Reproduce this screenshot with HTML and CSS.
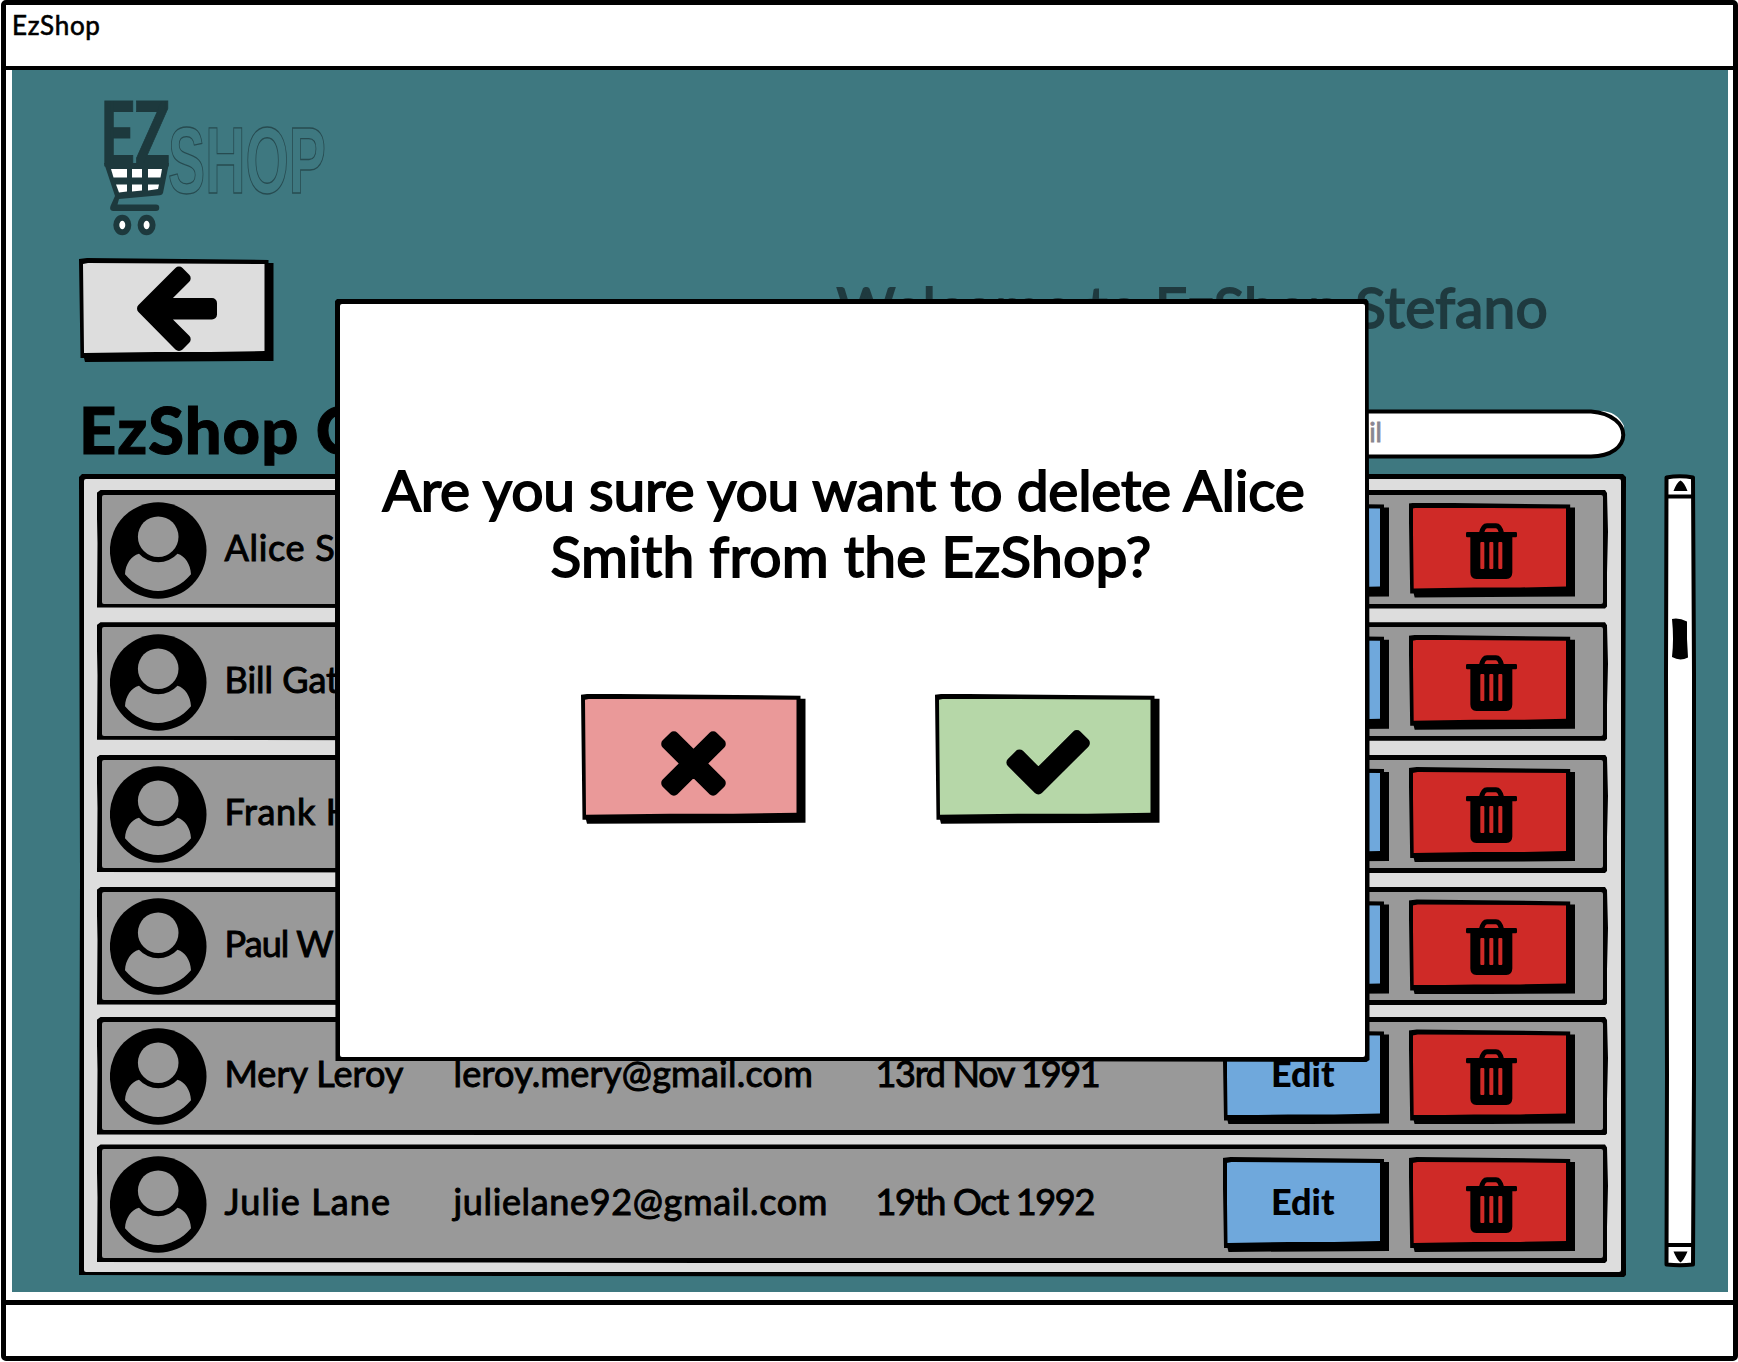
FILE: index.html
```html
<!DOCTYPE html>
<html lang="en">
<head>
<meta charset="utf-8">
<title>EzShop</title>
<link rel="stylesheet" href="styles.css">
</head>
<body>
<svg class="defs" aria-hidden="true">
  <symbol id="avatar" viewBox="0 0 97 97">
    <circle cx="48.2" cy="48.5" r="48.3" fill="#000"/>
    <circle cx="48.2" cy="34.7" r="20.3" fill="#999"/>
    <path fill="#999" d="M29 51.7A26 26 0 0 0 67.5 51.7C75 54 80.5 62 81 72.3C72 83 60 89 48 89C36 89 24 83 15 72.3C15.5 62 21 54 29 51.7Z"/>
  </symbol>
  <symbol id="trash" viewBox="0 0 153 168">
    <path fill="none" stroke="#000" stroke-width="15" d="M46 32C50 14 54 8 63 8H90C99 8 103 14 107 32"/>
    <rect y="27" width="153" height="16" rx="4"/>
    <path fill-rule="evenodd" d="M13 38H139V148Q139 168 121 168H31Q13 168 13 148ZM46 57Q43 57 43 60V135Q43 138 46 138H52Q55 138 55 135V60Q55 57 52 57ZM73 57Q70 57 70 60V135Q70 138 73 138H79Q82 138 82 135V60Q82 57 79 57ZM100 57Q97 57 97 60V135Q97 138 100 138H106Q109 138 109 135V60Q109 57 106 57Z"/>
  </symbol>
</svg>
<div class="window">
  <header class="titlebar">EzShop</header>
  <main class="screen">
    <svg class="logo" viewBox="79 71 260 169" width="260" height="169">
      <g class="logo-text">
        <text x="101" y="166" font-size="91.5" textLength="69" lengthAdjust="spacingAndGlyphs" class="logo-ez">EZ</text>
        <text x="168" y="193" font-size="95" textLength="158" lengthAdjust="spacingAndGlyphs" class="logo-shop">SHOP</text>
      </g>
      <path fill="#1d393d" d="M104 163H169L163 193Q162.500 195 160 195.300L119 199L117.500 204.500H156A3.200 3.200 0 0 1 156 211H113Q109 210.500 110.500 206L115 196Z"/>
      <g fill="#fff">
        <path d="M111 169H127V177.500H113.500Z"/><path d="M132 169H142V177.500H132Z"/><path d="M148 169H162L160.500 177.500H148Z"/>
        <path d="M116 184.500H127V191.500L119 192.500Z"/><path d="M132 184.500H142V190.500L132 191.500Z"/><path d="M148 184.500H159L158 189L148 190.500Z"/>
      </g>
      <g fill="#fff" stroke="#1d393d" stroke-width="6">
        <ellipse cx="122.300" cy="225" rx="6" ry="7.300"/><ellipse cx="146.600" cy="225" rx="6" ry="7.300"/>
      </g>
    </svg>
    <div class="topline">
      <button class="btn back" aria-label="Back">
        <svg viewBox="0 0 80 85" width="80" height="85"><path class="solid" d="M5 42.500L42 5.500L48.700 12.200L23.900 37H75V48.500H23.900L48.700 73.300L42 80Z"/></svg>
      </button>
      <h2 class="welcome">Welcome to EzShop Stefano</h2>
    </div>
    <div class="listhead">
      <h1>EzShop Customers</h1>
      <div class="search">
        <svg viewBox="0 0 526 50" width="526" height="50"><path fill="#fff" d="M24 2H500Q517 2 524 17L520 38L505 45H24Z"/><path fill="#fff" stroke="#000" stroke-width="4" d="M24 2.500H491C535 6 533 47.500 491 47.500H24C-5 47 -5 4 24 2.500Z"/></svg>
        <span>Search by email</span>
      </div>
    </div>
    <div class="content">
      <section class="panel">
        <article class="row"><svg class="avatar"><use href="#avatar"/></svg><span class="name medium">Alice Smith</span><span class="mail"></span><span class="date"></span><button class="btn edit">Edit</button><button class="btn del" aria-label="Delete"><svg><use href="#trash"/></svg></button></article>
        <article class="row"><svg class="avatar"><use href="#avatar"/></svg><span class="name">Bill Gates</span><span class="mail"></span><span class="date"></span><button class="btn edit">Edit</button><button class="btn del" aria-label="Delete"><svg><use href="#trash"/></svg></button></article>
        <article class="row"><svg class="avatar"><use href="#avatar"/></svg><span class="name medium">Frank H</span><span class="mail"></span><span class="date"></span><button class="btn edit">Edit</button><button class="btn del" aria-label="Delete"><svg><use href="#trash"/></svg></button></article>
        <article class="row"><svg class="avatar"><use href="#avatar"/></svg><span class="name tight">Paul W</span><span class="mail"></span><span class="date"></span><button class="btn edit">Edit</button><button class="btn del" aria-label="Delete"><svg><use href="#trash"/></svg></button></article>
        <article class="row"><svg class="avatar"><use href="#avatar"/></svg><span class="name">Mery Leroy</span><span class="mail">leroy.mery@gmail.com</span><span class="date">13rd Nov 1991</span><button class="btn edit">Edit</button><button class="btn del" aria-label="Delete"><svg><use href="#trash"/></svg></button></article>
        <article class="row"><svg class="avatar"><use href="#avatar"/></svg><span class="name wide">Julie Lane</span><span class="mail wide">julielane92@gmail.com</span><span class="date">19th Oct 1992</span><button class="btn edit">Edit</button><button class="btn del" aria-label="Delete"><svg><use href="#trash"/></svg></button></article>
      </section>
      <svg class="scrollbar" viewBox="0 0 32 794" width="32" height="794">
        <path fill="#fff" stroke="#000" stroke-width="4" stroke-linejoin="round" d="M2.500 3.500Q16 1 29 3.500L30 200V600L29 790.500Q16 792 2.500 790.500L3 600L2 200Z"/>
        <path stroke="#000" stroke-width="4" d="M2 22.500H30M2 771H30"/>
        <path d="M9.500 17Q13 8 16.500 6.500Q20 8 23.500 17ZM9.500 777.500H23.500Q20 786 16.500 788.500Q13 786 9.500 777.500Z"/>
        <path d="M8 145Q15 143.500 23 147.500Q22.500 165 24 183.500Q16 187.500 8 183Q10 165 8 145Z"/>
      </svg>
    </div>
  </main>
  <footer class="statusbar"></footer>
  <div class="modal" role="dialog">
    <p><span class="l1">Are you sure you want to delete Alice</span><br><span class="l2">Smith from the EzShop?</span></p>
    <div class="choices">
      <button class="btn no" aria-label="Cancel"><svg viewBox="-32.500 -32.500 65 65" width="65" height="65"><path class="solid" d="M19.600-27.300L27.300-19.600L7.700 0L27.300 19.600L19.600 27.300L0 7.700L-19.600 27.300L-27.300 19.600L-7.700 0L-27.300-19.600L-19.600-27.300L0-7.700Z"/></svg></button>
      <button class="btn yes" aria-label="Confirm"><svg viewBox="0 0 84 65" width="84" height="65"><path class="solid" d="M5.400 32.500L13.450 24.400L32.400 43.400L70.800 5L78.900 13.100L32.400 59.500Z"/></svg></button>
    </div>
  </div>
</div>
</body>
</html>
```
FILE: styles.css
```css
* { box-sizing: border-box; margin: 0; padding: 0; }
body { width: 1738px; height: 1362px; overflow: hidden; background: #fff; color: #000; font-family: Lato, "Open Sans", sans-serif; }
.defs { position: absolute; width: 0; height: 0; }
.window { position: relative; display: flex; flex-direction: column; width: 1737px; height: 1361px; margin-left: 1px; border: 5px solid #000; border-top-width: 5.5px; border-radius: 5px; background: #fff; }
.titlebar { height: 65px; border-bottom: 4px solid #000; padding: 5px 6px; font-size: 26px; line-height: 30px; letter-spacing: 0.7px; -webkit-text-stroke: 0.6px #000; }
.screen { display: flex; flex-direction: column; height: 1222px; margin: 0 5px 0 6px; padding: 1px 0 0 67px; background: #3e7880; }
.statusbar { flex: 1; margin-top: 8px; border-top: 5px solid #000; }
.logo { display: block; flex: none; overflow: visible; }
.logo-text { font-weight: 700; }
.logo-ez { font-family: Roboto, sans-serif; fill: #1d393d; stroke: #1d393d; }
.logo-shop { font-family: "Liberation Sans", sans-serif; fill: none; stroke: #274b50; stroke-width: 1.3; }
.solid { fill: #000; stroke: #000; stroke-width: 10; stroke-linejoin: round; }

/* hand-drawn button: black slab with a coloured face cut into it */
.btn {
  position: relative; z-index: 0; display: flex; align-items: center; justify-content: center; flex: none;
  border: 0; background: #000; color: #000; font: inherit;
  clip-path: polygon(0 1px, 8px 0, calc(100% - 5px) 2px, calc(100% - 5px) 5px, 100% 5px, 100% calc(100% - 1px), 6px 100%, 5px calc(100% - 4px), 1.5px calc(100% - 4px));
}
.btn::before {
  content: ""; position: absolute; z-index: -1; inset: 5px 9px 9px 4px; background: var(--face);
  clip-path: polygon(0 1px, 5px 0, 100% 1px, 100% calc(100% - 2px), 70% calc(100% - 1px), 40% calc(100% - 1px), 1px 100%);
}
.back { --face: #ddd; width: 194.5px; height: 104px; }
.back svg { margin: -4px 0 0 2px; }
.topline { display: flex; height: 104px; margin-top: 18px; }
.welcome { margin-left: 563px; font-weight: 400; font-size: 57px; line-height: 70px; padding-top: 13px; color: #1f3a3f; letter-spacing: 0.1px; white-space: nowrap; -webkit-text-stroke: 1.8px #1f3a3f; }
.listhead { display: flex; justify-content: space-between; height: 112px; padding: 47px 102px 0 0; }
.listhead h1 { margin-top: -10px; font-size: 65px; line-height: 60px; font-weight: 900; letter-spacing: 1px; white-space: nowrap; -webkit-text-stroke: 1px #000; }
.search { display: grid; width: 526px; height: 50px; }
.search svg, .search span { grid-area: 1 / 1; }
.search span { justify-self: end; margin-right: 244px; font-size: 27px; line-height: 45px; color: #8a8690; -webkit-text-stroke: 0.8px #8a8690; }
.content { display: flex; gap: 38px; }

.panel, .row, .modal { position: relative; z-index: 0; background: #000; }
.panel::before, .row::before, .modal::before { content: ""; position: absolute; z-index: -1; inset: 5px; background: var(--face); border-radius: 2px; }
.panel {
  --face: #ddd; width: 1547px; height: 803px; padding: 16px 18px 0 17.5px;
  clip-path: polygon(0 3px, 3px 0, calc(100% - 3px) 0, 100% 3px, calc(100% - 1px) 50%, 100% calc(100% - 2px), calc(100% - 2px) 100%, 30% calc(100% - 1px), 0 calc(100% - 2px), 1px 50%);
}
.row {
  --face: #999; display: flex; height: 118.5px; margin-bottom: 13.8px; padding-left: 13px;
  clip-path: polygon(0 3px, 4px 0, calc(100% - 3px) 0, calc(100% - 1px) 3px, 100% 35%, calc(100% - 1px) 70%, calc(100% - 1px) calc(100% - 2px), calc(100% - 3px) 100%, 40% 100%, 0.5px calc(100% - 1px), 1px 45%);
}
.row:nth-child(4) { margin-bottom: 11.5px; }
.row:nth-child(5) { margin-bottom: 9px; }
.avatar { width: 97px; height: 97px; margin-top: 11.5px; flex: none; }
.row span { font-size: 36px; line-height: 44px; padding-top: 34.5px; white-space: nowrap; -webkit-text-stroke: 1px #000; flex: none; }
.name { width: 229px; margin-left: 18px; }
.mail { width: 422px; letter-spacing: 0.25px; }
.date { width: 347px; letter-spacing: -1.3px; }
.name.wide { letter-spacing: 1.1px; }
.name.medium { letter-spacing: 0.7px; }
.mail.wide { letter-spacing: 0.65px; }
.name.tight { letter-spacing: -0.9px; }
.edit, .del { width: 166.5px; height: 95px; margin-top: 12.5px; }
.edit { --face: #6fa8dc; font-size: 36px; font-weight: 900; padding: 0 6px 7px 0; }
.del { --face: #cf2a27; margin-left: 19.7px; }
.del svg { width: 51px; height: 56px; margin: 1px 0 0 0; }
.scrollbar { flex: none; }

.modal {
  --face: #fff; position: absolute; z-index: 2; left: 328.5px; top: 293.5px; width: 1035px; height: 763.5px; padding-top: 157px;
  clip-path: polygon(0 3px, 3px 0, calc(100% - 3px) 0.5px, calc(100% - 1px) 3px, 100% 50%, 100% calc(100% - 2px), calc(100% - 3px) 100%, 50% calc(100% - 1px), 1px calc(100% - 1px));
}
.modal p { margin-left: -17px; text-align: center; font-size: 57px; line-height: 66.6px; white-space: nowrap; -webkit-text-stroke: 1.8px #000; }
.l1 { letter-spacing: -0.25px; }
.l2 { letter-spacing: 0.2px; margin-left: 15px; }
.choices { display: flex; gap: 129.5px; margin: 105px 0 0 246.5px; }
.no, .yes { width: 224.5px; height: 130px; }
.no { --face: #ea9999; }
.yes { --face: #b6d7a8; }
.no svg { margin-top: 9px; }
.yes svg { margin: 7px 0 0 2px; }
```
